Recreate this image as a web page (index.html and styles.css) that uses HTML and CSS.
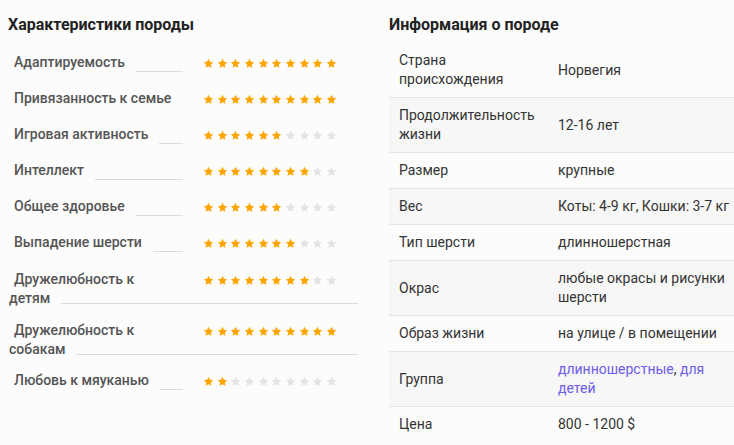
FILE: index.html
```html
<!DOCTYPE html>
<html lang="ru">
<head>
<meta charset="utf-8">
<title>Порода</title>
<link rel="stylesheet" href="styles.css">
</head>
<body>
<svg width="0" height="0" class="defs">
  <defs>
    <symbol id="star" viewBox="0 0 24 24"><path d="M12 1.8l3.1 6.6 7.2.9-5.3 5 1.4 7.1L12 17.9l-6.4 3.5 1.4-7.1-5.3-5 7.2-.9z"/></symbol>
  </defs>
</svg>
<div class="page">
  <section class="traits">
    <h2 class="title">Характеристики породы</h2>
    <div class="trait-list" id="traits"></div>
  </section>
  <section class="info">
    <h2 class="title">Информация о породе</h2>
    <table class="info-table">
      <tr><td class="k">Страна происхождения</td><td class="v">Норвегия</td></tr>
      <tr><td class="k">Продолжительность жизни</td><td class="v">12-16 лет</td></tr>
      <tr><td class="k">Размер</td><td class="v">крупные</td></tr>
      <tr><td class="k">Вес</td><td class="v">Коты: 4-9 кг, Кошки: 3-7 кг</td></tr>
      <tr><td class="k">Тип шерсти</td><td class="v">длинношерстная</td></tr>
      <tr><td class="k">Окрас</td><td class="v">любые окрасы и рисунки шерсти</td></tr>
      <tr><td class="k">Образ жизни</td><td class="v">на улице / в помещении</td></tr>
      <tr><td class="k">Группа</td><td class="v"><a href="#" class="link">длинношерстные</a>, <a href="#" class="link">для детей</a></td></tr>
      <tr><td class="k">Цена</td><td class="v">800 - 1200 $</td></tr>
    </table>
  </section>
</div>
<script src="app.js"></script>
</body>
</html>
```
FILE: app.js
```js
const traits = [
  ["Адаптируемость", 10],
  ["Привязанность к семье", 10],
  ["Игровая активность", 6],
  ["Интеллект", 8],
  ["Общее здоровье", 6],
  ["Выпадение шерсти", 7],
  ["Дружелюбность к|детям", 8],
  ["Дружелюбность к|собакам", 10],
  ["Любовь к мяуканью", 2]
];
function stars(n) {
  let s = '<div class="stars">';
  for (let i = 0; i < 10; i++) {
    s += '<svg class="star ' + (i < n ? 'on' : 'off') + '"><use href="#star"/></svg>';
  }
  return s + '</div>';
}
const list = document.getElementById('traits');
list.innerHTML = traits.map(([name, n]) => {
  if (name.includes('|')) {
    const [a, b] = name.split('|');
    return '<div class="trait wrapped"><div class="trait-line"><span class="label first">' + a +
      '</span>' + stars(n) + '</div><div class="trait-line second"><span class="label">' + b +
      '</span><span class="leader"></span></div></div>';
  }
  return '<div class="trait"><div class="trait-main"><span class="label first">' + name +
    '</span><span class="leader"></span></div>' + stars(n) + '</div>';
}).join('');
```
FILE: styles.css
```css
html, body {
  margin: 0;
  padding: 0;
  background: #fcfcfc;
  overflow: hidden;
}
body {
  font-family: Roboto, "Noto Sans", sans-serif;
  color: #333;
}
.defs {
  position: absolute;
}
.page {
  display: grid;
  grid-template-columns: 361px 345px;
  column-gap: 20px;
  padding: 15px 0 0 8px;
}
.title {
  margin: 0;
  font-size: 16px;
  line-height: 20px;
  font-weight: 700;
  color: #222;
}
.trait-list {
  margin: 17px 0 0 1px;
  width: 349px;
}
.trait {
  display: flex;
  align-items: flex-start;
  margin-bottom: 16px;
}
.trait-main {
  width: 174px;
  display: flex;
  height: 20px;
}
.label {
  font-size: 14px;
  line-height: 20px;
  font-weight: 500;
  color: #555;
  white-space: nowrap;
  box-sizing: border-box;
}
.label.first {
  padding-left: 5px;
}
.leader {
  flex: 1;
  margin-left: 11px;
  border-bottom: 1px solid #dcdcdf;
}
.stars {
  display: flex;
  gap: 2.67px;
  margin-left: 20px;
  margin-top: 6px;
  width: 155px;
}
.star {
  width: 11px;
  height: 11px;
}
.star.on { fill: #ffa502; }
.star.off { fill: #e3e3e8; }
.trait.wrapped {
  display: block;
  padding-top: 2px;
  margin-bottom: 11px;
}
.wrapped .trait-line {
  display: flex;
}
.wrapped .label {
  line-height: 19px;
}
.wrapped .trait-line:first-child .label {
  width: 174px;
}
.wrapped .stars {
  margin-top: 5px;
}
.wrapped .second {
  padding-bottom: 4px;
}
.wrapped .second .label {
  margin-bottom: -4px;
}
.info-table {
  margin-top: 8px;
  width: 345px;
  border-collapse: collapse;
  font-size: 14px;
  line-height: 19px;
  color: #333;
}
.info-table td {
  padding: 8px 0 8px 10px;
  border-bottom: 1px solid #e2e2ea;
  vertical-align: middle;
}
.info-table tr:nth-child(even) td {
  background: #f7f7f7;
}
.info-table tr:last-child td {
  border-bottom: none;
}
.info-table .k {
  width: 149px;
}
.link {
  color: #6c5ce7;
  text-decoration: none;
}
```
